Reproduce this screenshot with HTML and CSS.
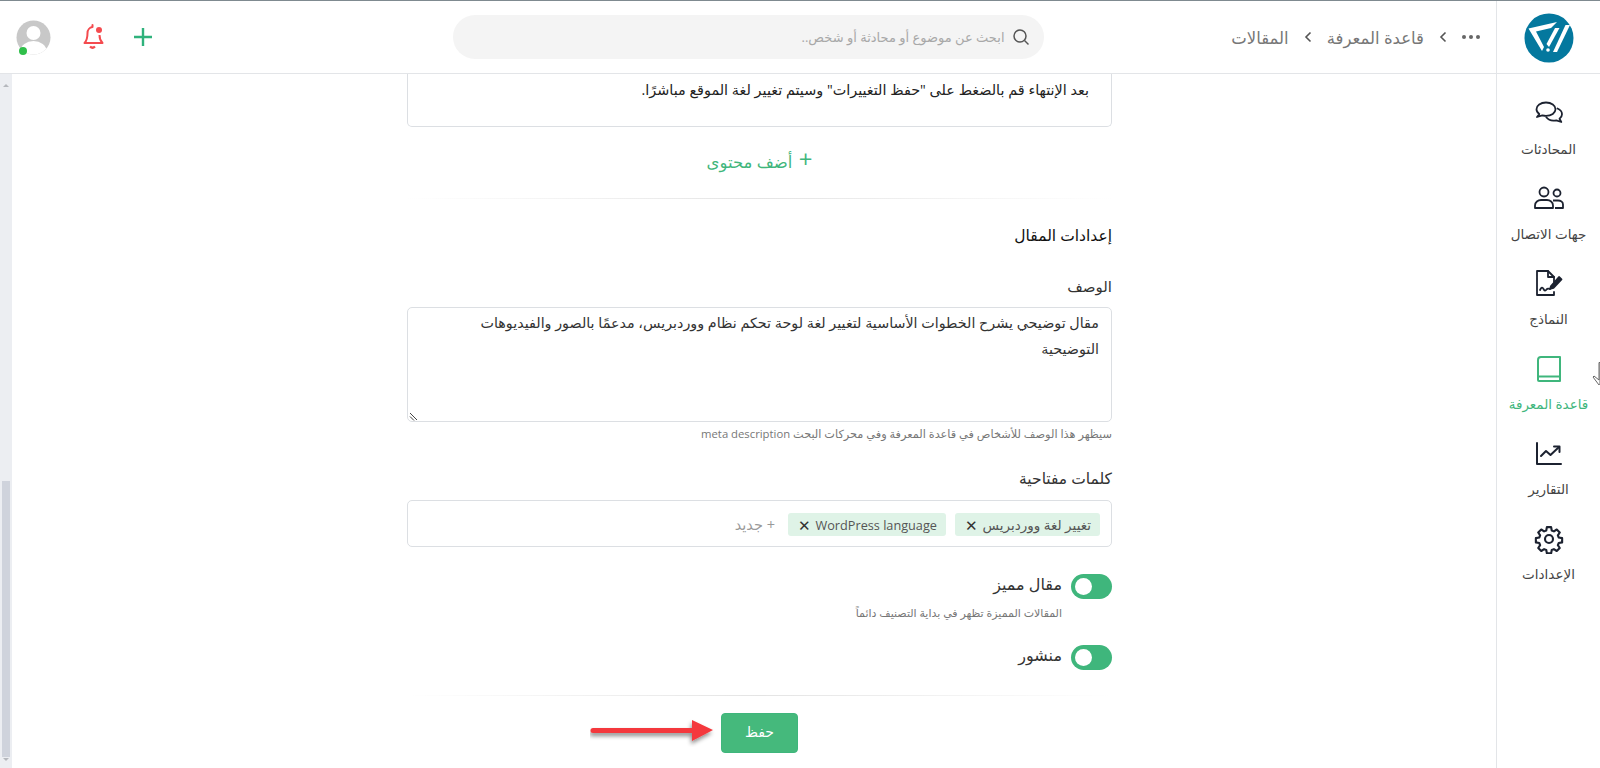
FILE: index.html
```html
<!DOCTYPE html>
<html lang="ar" dir="rtl">
<head>
<meta charset="utf-8">
<title>المقالات</title>
<link rel="stylesheet" href="styles.css">
</head>
<body>
<div class="app">
  <aside class="rail">
    <div class="rail-logo">
      <svg width="50" height="50" viewBox="0 0 50 50"><circle cx="25" cy="25" r="24.5" fill="#04789e"/><path d="M4.500 15.500L33 9l-6 6-15 3.500 8 15.500-2 4z" fill="#fff"/><path d="M31 15h4.500L25 34l-2.500-3z" fill="#fff"/><path d="M41.500 12H46L33 39h-4z" fill="#fff"/><circle cx="24" cy="37" r="1.800" fill="#fff"/></svg>
    </div>
    <nav class="rail-nav">
      <a class="rail-item">
        <svg class="rail-icon" width="30" height="30" viewBox="0 0 30 30" fill="none" stroke="#1c2230" stroke-width="1.8" stroke-linejoin="round" stroke-linecap="round"><path d="M12 3.5c-5.5 0-9.5 3-9.5 6.800 0 2 1.200 3.700 2.800 4.800L3 18l5.300-1.600c1.200.3 2.400.5 3.700.5 5.500 0 9.500-3 9.500-6.600S17.500 3.500 12 3.500z"/><path d="M23.500 9.500c3 1.200 4.500 3.300 4.500 5.700 0 1.800-1 3.400-2.500 4.500l1.800 3.300-5-1.700c-4 .8-8-.4-10-3"/></svg>
        <span>المحادثات</span>
      </a>
      <a class="rail-item">
        <svg class="rail-icon" width="32" height="30" viewBox="0 0 32 30" fill="none" stroke="#1c2230" stroke-width="1.8" stroke-linejoin="round"><circle cx="11" cy="8" r="4.500"/><path d="M2 24v-2.500c0-3.500 3-5.500 6-5.500h6c3 0 6 2 6 5.500V24z"/><circle cx="24" cy="9" r="3.500"/><path d="M20 16.500h5c2.500 0 5 1.500 5 4V24h-8"/></svg>
        <span>جهات الاتصال</span>
      </a>
      <a class="rail-item">
        <svg class="rail-icon" width="30" height="30" viewBox="0 0 30 30" fill="none" stroke="#1c2230" stroke-width="1.800" stroke-linejoin="round" stroke-linecap="round"><path d="M20 13V8l-6-6H3v24h17v-3"/><path d="M14 2v6h6"/><path d="M6 21c1.500-3 2.500-3 3.500-1s2 2 3 .5 2-1 3.500-.5"/><path d="M17 17l8-9 2.500 2.500-8 8.500-3.500 1z" fill="#1c2230"/></svg>
        <span>النماذج</span>
      </a>
      <a class="rail-item rail-item-active">
        <svg class="rail-icon" width="30" height="30" viewBox="0 0 30 30" fill="none" stroke="#3fb67c" stroke-width="2" stroke-linejoin="round"><path d="M26 3H7a3 3 0 0 0-3 3v20a1 1 0 0 0 1 1h21V3z"/><path d="M4 22.500h22"/></svg>
        <span>قاعدة المعرفة</span>
      </a>
      <a class="rail-item">
        <svg class="rail-icon" width="30" height="30" viewBox="0 0 30 30" fill="none" stroke="#1c2230" stroke-width="2" stroke-linejoin="round" stroke-linecap="round"><path d="M3 4v21h24"/><path d="M7 17l5-5 4.500 4L25 8"/><path d="M20 7.500h5.500V13" /></svg>
        <span>التقارير</span>
      </a>
      <a class="rail-item">
        <svg class="rail-icon" width="30" height="30" viewBox="0 0 24 24" fill="none" stroke="#1c2230" stroke-width="1.700" stroke-linejoin="round"><circle cx="12" cy="12" r="3.200"/><path d="M10.300 2.500h3.400l.5 2.700 1.700.7 2.300-1.500 2.400 2.400-1.500 2.300.7 1.700 2.700.5v3.400l-2.700.5-.7 1.700 1.500 2.300-2.400 2.400-2.300-1.500-1.700.7-.5 2.700h-3.400l-.5-2.700-1.700-.7-2.300 1.500-2.400-2.400 1.500-2.300-.7-1.700-2.700-.5v-3.400l2.700-.5.7-1.700-1.500-2.300 2.400-2.400 2.300 1.500 1.700-.7z"/></svg>
        <span>الإعدادات</span>
      </a>
    </nav>
  </aside>

  <div class="main">
    <header class="topbar">
      <div class="crumbs">
        <span class="crumb-dots"><i></i><i></i><i></i></span>
        <svg class="crumb-sep" width="10" height="12" viewBox="0 0 10 12" fill="none" stroke="#555" stroke-width="1.600"><path d="M7.500 1.500L3 6l4.500 4.500"/></svg>
        <span>قاعدة المعرفة</span>
        <svg class="crumb-sep" width="10" height="12" viewBox="0 0 10 12" fill="none" stroke="#555" stroke-width="1.600"><path d="M7.500 1.500L3 6l4.500 4.500"/></svg>
        <span>المقالات</span>
      </div>
      <div class="search">
        <svg width="18" height="18" viewBox="0 0 18 18" fill="none" stroke="#555" stroke-width="1.500"><circle cx="8" cy="8" r="6"/><path d="M12.500 12.500L16.500 16.500"/></svg>
        <span>ابحث عن موضوع أو محادثة أو شخص..</span>
      </div>
      <div class="actions">
        <svg class="act-plus" width="18" height="18" viewBox="0 0 18 18" fill="none" stroke="#2fb27c" stroke-width="2.400"><path d="M9 0v18M0 9h18"/></svg>
        <svg class="act-bell" width="24" height="26" viewBox="0 0 24 26" fill="none" stroke="#f44b4f" stroke-width="2" stroke-linejoin="round"><path d="M10.500 3a6 6 0 0 0-5 6c0 5-1 8-3 10h18c-2-2-3-5-3-8"/><path d="M10.500 1v2" stroke-linecap="round"/><path d="M8 22.500c1.500 1.500 3.500 1.500 5 0" stroke-width="2.200"/><circle cx="17" cy="6" r="3" fill="#f44b4f" stroke="none"/></svg>
        <span class="avatar">
          <svg width="35" height="35" viewBox="0 0 35 35"><defs><clipPath id="av"><circle cx="17.500" cy="17.500" r="17"/></clipPath></defs><circle cx="17.500" cy="17.500" r="17" fill="#c8c8c8"/><g clip-path="url(#av)" fill="#fff"><circle cx="17.500" cy="13" r="7"/><ellipse cx="17.500" cy="31" rx="13" ry="10"/></g></svg>
          <i class="presence"></i>
        </span>
      </div>
    </header>

    <div class="body">
      <div class="scrollbar">
        <span class="sb-up"></span>
        <span class="sb-track"><span class="sb-thumb"></span></span>
        <span class="sb-down"></span>
      </div>
      <main class="content">
        <div class="form">
          <div class="block">بعد الإنتهاء قم بالضغط على "حفظ التغييرات" وسيتم تغيير لغة الموقع مباشرًا.</div>
          <div class="add-content"><span class="add-plus">+</span> أضف محتوى</div>
          <hr class="rule">
          <h2 class="section-title">إعدادات المقال</h2>
          <label class="field-label">الوصف</label>
          <div class="textarea">مقال توضيحي يشرح الخطوات الأساسية لتغيير لغة لوحة تحكم نظام ووردبريس، مدعمًا بالصور والفيديوهات التوضيحية
            <svg class="grip" width="10" height="10" viewBox="0 0 10 10" stroke="#444" fill="none"><path d="M1 2l7 7M1 5.500l4 4"/></svg>
          </div>
          <p class="help">سيظهر هذا الوصف للأشخاص في قاعدة المعرفة وفي محركات البحث meta description</p>
          <label class="field-label field-label-kw">كلمات مفتاحية</label>
          <div class="tagbox">
            <span class="tag tag-ar">تغيير لغة ووردبريس <b class="tag-x">✕</b></span>
            <span class="tag">WordPress language <b class="tag-x">✕</b></span>
            <span class="tag-new">+ جديد</span>
          </div>
          <div class="toggle-row toggle-featured"><span class="toggle"></span><span class="toggle-label">مقال مميز</span></div>
          <p class="toggle-help">المقالات المميزة تظهر في بداية التصنيف دائماً</p>
          <div class="toggle-row toggle-published"><span class="toggle"></span><span class="toggle-label">منشور</span></div>
          <hr class="rule rule-end">
          <button class="save">حفظ</button>
        </div>
      </main>
    </div>
  </div>
</div>

<svg class="arrow" width="128" height="32" viewBox="0 0 128 32"><defs><filter id="sh" x="-10%" y="-50%" width="120%" height="220%"><feDropShadow dx="-1" dy="3" stdDeviation="2" flood-color="#000" flood-opacity=".45"/></filter></defs><path d="M3 13h99V5l21 10-21 11v-8H3a2.500 2.500 0 0 1 0-5z" fill="#f4393c" filter="url(#sh)"/></svg>
<svg class="hand" width="8" height="24" viewBox="0 0 8 24" fill="#fff" stroke="#666" stroke-width="1"><path d="M7 1.500H8V24H7L1 16l1-1 5 4z"/></svg>
</body>
</html>
```

FILE: styles.css
```css
* { box-sizing: border-box; }
html, body { margin: 0; height: 768px; overflow: hidden; background: #fff; }
body { font-family: "Open Sans", "DejaVu Sans", sans-serif; color: #333; font-size: 14px; border-top: 1px solid #7f8a90; position: relative; }
.app { display: flex; height: 767px; }

.rail { width: 104px; flex: none; border-left: 1px solid #e3e5e8; display: flex; flex-direction: column; }
.rail-logo { height: 73px; display: flex; align-items: center; justify-content: center; border-bottom: 1px solid #e3e5e8; padding-top: 1px; }
.rail-logo svg { margin-left: 1px; }
.rail-nav { display: flex; flex-direction: column; padding-top: 25px; }
.rail-item { height: 85px; display: flex; flex-direction: column; align-items: center; justify-content: flex-start; gap: 11px; font-size: 13.500px; color: #444; white-space: nowrap; }
.rail-item-active { color: #3fb67c; }
.rail-icon { display: block; flex: none; }

.main { flex: 1; min-width: 0; display: flex; flex-direction: column; }
.topbar { height: 73px; flex: none; display: grid; grid-template-columns: 1fr 591px 1fr; align-items: center; border-bottom: 1px solid #e3e5e8; }
.crumbs { display: flex; align-items: center; gap: 14px; padding-right: 16px; color: #777; font-size: 16.500px; }
.crumb-dots { display: flex; gap: 3px; }
.crumb-dots i { width: 4px; height: 4px; border-radius: 50%; background: #666; }
.crumb-sep { flex: none; }
.search { height: 44px; border-radius: 22px; background: #f4f4f4; display: flex; align-items: center; gap: 7px; padding-right: 14px; font-size: 13px; color: #a8a8a8; }
.actions { display: flex; align-items: center; justify-content: flex-end; padding-left: 16px; gap: 28px; }
.act-plus { margin-left: 0; }
.act-bell { margin-left: 3px; }
.avatar { position: relative; display: block; width: 35px; height: 35px; }
.avatar svg { display: block; }
.presence { position: absolute; left: 3px; bottom: 0; width: 8px; height: 8px; border-radius: 50%; background: #2fbf4a; }

.body { flex: 1; min-height: 0; display: flex; flex-direction: row-reverse; }
.scrollbar { width: 12px; flex: none; background: #eceef2; display: flex; flex-direction: column; align-items: center; }
.sb-up, .sb-down { flex: none; width: 0; border: 3px solid transparent; }
.sb-up { height: 12px; border-bottom-color: #b5b8bd; margin-top: 1px; }
.sb-down { height: 10px; border-top-color: #b5b8bd; margin-top: 1px; }
.sb-track { flex: 1; width: 100%; display: flex; flex-direction: column; justify-content: flex-end; }
.sb-thumb { display: block; height: 276px; margin: 0 2px; background: #cfd3dc; }

.content { flex: 1; min-width: 0; padding-right: 384px; overflow: hidden; }
.form { width: 705px; display: flex; flex-direction: column; }
.block { height: 53px; padding: 4px 22px 0; line-height: 24px; border: 1px solid #dcdfe3; border-top: 0; border-radius: 0 0 5px 5px; font-size: 14.400px; color: #222; }
.add-content { height: 26px; margin-top: 20px; text-align: center; color: #3fb67c; font-size: 16.500px; line-height: 26px; }
.add-plus { font-size: 24px; line-height: 1; margin-left: 2px; }
.rule { width: 100%; height: 1px; margin: 0; border: 0; background: linear-gradient(90deg, rgba(225,225,225,0), #e4e4e4 50%, rgba(225,225,225,0)); }
.add-content + .rule { margin-top: 25px; }
.section-title { margin: 25px 0 0; font-size: 15.500px; line-height: 22px; font-weight: 400; color: #111; }
.field-label { display: block; line-height: 22px; color: #333; font-size: 15px; }
.section-title + .field-label { margin-top: 29px; }
.textarea { position: relative; height: 115px; margin-top: 10px; padding: 2px 12px 0 40px; line-height: 26px; border: 1px solid #dcdfe3; border-radius: 5px; color: #333; font-size: 14.300px; }
.grip { position: absolute; left: 1px; bottom: 0; }
.help { margin: 3px 0 0; font-size: 11.300px; line-height: 18px; color: #777; }
.field-label-kw { margin-top: 24px; font-size: 15.500px; }
.tagbox { height: 47px; margin-top: 11px; border: 1px solid #dcdfe3; border-radius: 5px; padding: 12px 11px 0; display: flex; align-items: flex-start; gap: 9px; }
.tag { height: 23px; display: flex; align-items: center; gap: 5px; padding: 0 9px 0 10px; border-radius: 3px; background: #dff3e7; color: #555; font-size: 12.700px; white-space: nowrap; }
.tag-ar { font-size: 13.500px; }
.tag-x { font-size: 15px; font-weight: 700; color: #333; }
.tag-new { color: #999; font-size: 14.500px; line-height: 23px; margin-right: 4px; }
.toggle-row { display: flex; align-items: center; gap: 9px; height: 26px; }
.toggle-featured { margin-top: 26px; }
.toggle-published { margin-top: 23px; }
.toggle { position: relative; width: 41px; height: 25px; flex: none; border-radius: 13px; background: #3fb67c; }
.toggle::after { content: ""; position: absolute; left: 4px; top: 4px; width: 17px; height: 17px; border-radius: 50%; background: #fff; }
.toggle-label { font-size: 16px; color: #333; padding-bottom: 5px; }
.toggle-help { margin: 6px 50px 0 0; font-size: 11px; line-height: 16px; color: #777; }
.rule-end { margin-top: 25px; }
.save { display: block; width: 77px; height: 40px; margin: 17px auto 0; padding: 0 0 4px; border: 1px solid #3fb67c; border-radius: 4px; background: #45b97c; color: #fff; font: 400 14px "Open Sans", "DejaVu Sans", sans-serif; }

.arrow { position: absolute; left: 590px; top: 714px; }
.hand { position: absolute; left: 1592px; top: 360px; }
```
